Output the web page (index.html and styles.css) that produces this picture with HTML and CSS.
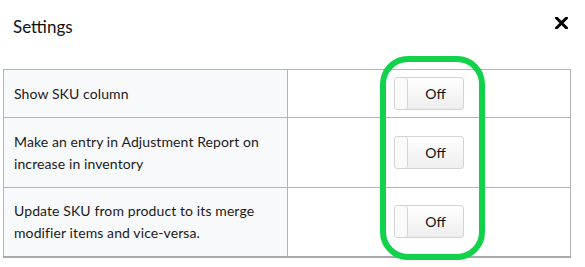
FILE: index.html
```html
<!DOCTYPE html>
<html>
<head>
<meta charset="utf-8">
<link rel="stylesheet" href="styles.css">
</head>
<body>
<div class="modal">
  <div class="header">
    <h2 class="title">Settings</h2>
    <button class="close" aria-label="Close">
      <svg width="13" height="12" viewBox="0 0 13 12"><path d="M1.5 1 L11.5 11 M11.5 1 L1.5 11" stroke="#000" stroke-width="3" stroke-linecap="square"/></svg>
    </button>
  </div>
  <table class="settings">
    <tr class="r1">
      <td class="label">Show SKU column</td>
      <td class="ctrl"><span class="toggle"><span class="knob"></span><span class="state">Off</span></span></td>
    </tr>
    <tr class="r2">
      <td class="label">Make an entry in Adjustment Report on increase in inventory</td>
      <td class="ctrl"><span class="toggle"><span class="knob"></span><span class="state">Off</span></span></td>
    </tr>
    <tr class="r3">
      <td class="label">Update SKU from product to its merge modifier items and vice-versa.</td>
      <td class="ctrl"><span class="toggle"><span class="knob"></span><span class="state">Off</span></span></td>
    </tr>
  </table>
  <div class="highlight"></div>
</div>
</body>
</html>
```
FILE: styles.css
```css
* { box-sizing: border-box; }
html, body { margin: 0; padding: 0; background: #fff; }
body { font-family: "Lato", "Noto Sans", sans-serif; color: #1a1a1a; }
.modal { position: relative; width: 585px; height: 267px; }
.header {
  height: 69px;
  display: flex;
  align-items: flex-start;
  justify-content: space-between;
  padding: 17px 17px 0 13px;
}
.title { margin: 0; font-size: 17px; line-height: 20px; font-weight: 400; color: #111; }
.close { border: 0; background: none; padding: 0; margin-top: 0; display: flex; }
.settings {
  margin-left: 3px;
  width: 568px;
  border-collapse: collapse;
  border-top: 1px solid #b4b4b8;
  border-left: 1px solid #b4b4b8;
  border-right: 1px solid #b4b4b8;
  border-bottom: 2px solid #a9a9ad;
  font-size: 14px;
}
.settings td { border-bottom: 1px solid #b4b4b8; padding: 0 10px; }
.settings tr:last-child td { border-bottom: 0; }
.label { width: 284px; background: #f8f9fb; border-right: 1px solid #b4b4b8; line-height: 22px; letter-spacing: 0.1px; }
.ctrl { text-align: center; background: #fff; }
.r1 td { height: 48px; }
.r2 td { height: 70px; }
.r3 td { height: 69px; }
.toggle {
  display: inline-flex;
  vertical-align: middle;
  width: 70px;
  height: 33px;
  border: 1px solid #d4d4d4;
  border-radius: 3px;
  background: linear-gradient(#ffffff, #eeeeee);
  overflow: hidden;
}
.knob { width: 13px; border-right: 1px solid #d4d4d4; background: #fafafa; border-radius: 3px; }
.state { flex: 1; display: flex; align-items: center; justify-content: center; font-size: 14px; color: #111; }
.highlight {
  position: absolute;
  left: 380px;
  top: 56px;
  width: 105px;
  height: 204px;
  border: 6px solid #12d14b;
  border-radius: 28px;
  pointer-events: none;
}
```
